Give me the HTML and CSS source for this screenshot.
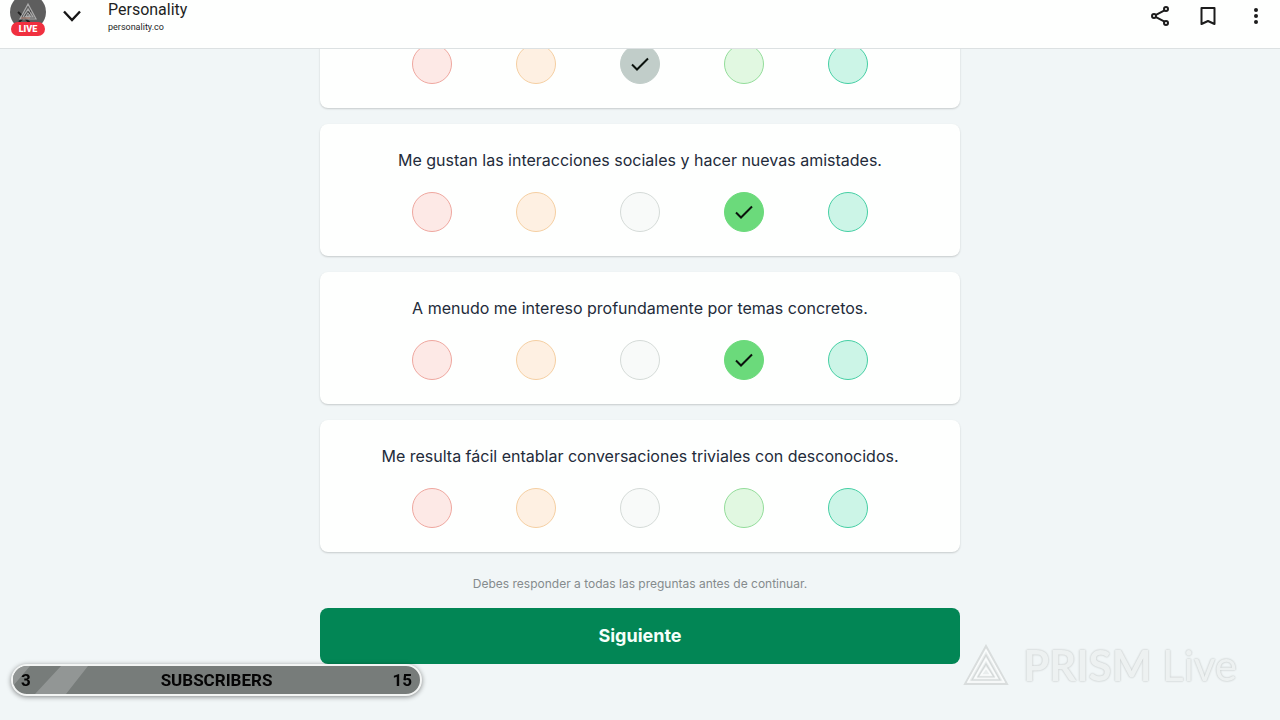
FILE: index.html
```html
<!DOCTYPE html>
<html lang="es">
<head>
<meta charset="utf-8">
<meta name="viewport" content="width=device-width, initial-scale=1">
<title>Personality</title>
<link rel="stylesheet" href="styles.css">
</head>
<body>
<div class="app">
  <header class="topbar">
    <div class="avatar">
      <svg class="avatar-img" viewBox="0 0 36 36" aria-hidden="true">
        <circle cx="18" cy="18" r="18" fill="#5e5e5e"/>
        <path d="M8 18l12 11M21 17L9 28" stroke="#202020" stroke-width="2" fill="none"/>
        <path d="M18 10L10 25H26ZM18 15L13 23H23ZM18 19L16 22H20Z" stroke="#aaa" stroke-width="1.2" fill="none"/>
        <path d="M11 24h9" stroke="#c08a78" stroke-width="1"/>
      </svg>
      <span class="live">LIVE</span>
    </div>
    <button class="icon-btn" aria-label="Minimizar">
      <svg viewBox="0 0 24 24"><path d="M4 7.500l8 8.500 8-8.500" fill="none" stroke="#161616" stroke-width="2.400"/></svg>
    </button>
    <div class="site">
      <span class="site-name">Personality</span>
      <span class="site-url">personality.co</span>
    </div>
    <nav class="actions">
      <button class="icon-btn" aria-label="Compartir">
        <svg viewBox="0 0 24 24" fill="none" stroke="#1c1c1c" stroke-width="2"><path d="M8 10.800l9-4.600M8 13.200l9 4.600"/><circle cx="6" cy="12" r="2"/><circle cx="18" cy="5" r="2"/><circle cx="18" cy="19" r="2"/></svg>
      </button>
      <button class="icon-btn" aria-label="Guardar">
        <svg viewBox="0 0 24 24" fill="none" stroke="#1c1c1c" stroke-width="2"><path d="M5.500 4h13v16l-6.500-3-6.500 3z" stroke-linejoin="round"/></svg>
      </button>
      <button class="icon-btn" aria-label="Más opciones">
        <svg viewBox="0 0 24 24" fill="#1c1c1c"><circle cx="12" cy="6" r="2"/><circle cx="12" cy="12" r="2"/><circle cx="12" cy="18" r="2"/></svg>
      </button>
    </nav>
  </header>

  <main class="page">
    <form class="quiz">
      <section class="card" role="radiogroup">
        <div class="scale">
          <label class="option"><input class="dot red" type="radio" name="q1" aria-label="1"></label>
          <label class="option"><input class="dot orange" type="radio" name="q1" aria-label="2"></label>
          <label class="option"><input class="dot gray" type="radio" name="q1" aria-label="3" checked><svg class="check" viewBox="0 0 20 20"><path d="M2 10.500l5 5L18 4.500"/></svg></label>
          <label class="option"><input class="dot green" type="radio" name="q1" aria-label="4"></label>
          <label class="option"><input class="dot teal" type="radio" name="q1" aria-label="5"></label>
        </div>
      </section>
      <section class="card" role="radiogroup" aria-labelledby="q2">
        <p class="question" id="q2">Me gustan las interacciones sociales y hacer nuevas amistades.</p>
        <div class="scale">
          <label class="option"><input class="dot red" type="radio" name="q2" aria-label="1"></label>
          <label class="option"><input class="dot orange" type="radio" name="q2" aria-label="2"></label>
          <label class="option"><input class="dot gray" type="radio" name="q2" aria-label="3"></label>
          <label class="option"><input class="dot green" type="radio" name="q2" aria-label="4" checked><svg class="check" viewBox="0 0 20 20"><path d="M2 10.500l5 5L18 4.500"/></svg></label>
          <label class="option"><input class="dot teal" type="radio" name="q2" aria-label="5"></label>
        </div>
      </section>
      <section class="card" role="radiogroup" aria-labelledby="q3">
        <p class="question" id="q3">A menudo me intereso profundamente por temas concretos.</p>
        <div class="scale">
          <label class="option"><input class="dot red" type="radio" name="q3" aria-label="1"></label>
          <label class="option"><input class="dot orange" type="radio" name="q3" aria-label="2"></label>
          <label class="option"><input class="dot gray" type="radio" name="q3" aria-label="3"></label>
          <label class="option"><input class="dot green" type="radio" name="q3" aria-label="4" checked><svg class="check" viewBox="0 0 20 20"><path d="M2 10.500l5 5L18 4.500"/></svg></label>
          <label class="option"><input class="dot teal" type="radio" name="q3" aria-label="5"></label>
        </div>
      </section>
      <section class="card" role="radiogroup" aria-labelledby="q4">
        <p class="question" id="q4">Me resulta fácil entablar conversaciones triviales con desconocidos.</p>
        <div class="scale">
          <label class="option"><input class="dot red" type="radio" name="q4" aria-label="1"></label>
          <label class="option"><input class="dot orange" type="radio" name="q4" aria-label="2"></label>
          <label class="option"><input class="dot gray" type="radio" name="q4" aria-label="3"></label>
          <label class="option"><input class="dot green" type="radio" name="q4" aria-label="4"></label>
          <label class="option"><input class="dot teal" type="radio" name="q4" aria-label="5"></label>
        </div>
      </section>
      <div class="submit">
        <p class="hint">Debes responder a todas las preguntas antes de continuar.</p>
        <button class="next" type="button">Siguiente</button>
      </div>
    </form>
  </main>
</div>

<aside class="subs">
  <svg class="subs-stripes" viewBox="0 0 90 28" aria-hidden="true"><path d="M0 0h17L0 20zM22 28L48 0h27L53 28z" fill="#929695"/></svg>
  <span class="subs-now">3</span>
  <span class="subs-label">SUBSCRIBERS</span>
  <span class="subs-goal">15</span>
</aside>

<div class="watermark">
  <svg class="prism" viewBox="0 0 46 42" fill="none" aria-hidden="true">
    <path d="M23 2L2 40H44Z" fill="#e9eded" stroke="#d9dddd" stroke-width="2"/>
    <path d="M23 6L5 38H41ZM23 15L12 34H34ZM23 24L18 31H28Z" stroke="#fafcfc" stroke-width="1.500"/>
    <path d="M23 11L9 36H37ZM23 20L15 33H31Z" stroke="#d4d8d8" stroke-width="1.200"/>
  </svg>
  <span class="wordmark"><b>PRISM</b> Live</span>
</div>
</body>
</html>
```
FILE: styles.css
```css
* { box-sizing: border-box; }
body {
  margin: 0;
  background: #f1f6f7;
  color: #232b3a;
  font-family: Inter, "Liberation Sans", sans-serif;
}
p { margin: 0; }
button { font: inherit; border: 0; padding: 0; cursor: pointer; }

.app { display: flex; flex-direction: column; height: 100vh; }

.topbar {
  display: flex;
  flex: none;
  align-items: flex-start;
  height: 49px;
  padding: 0 12px 0 10px;
  background: #fefffe;
  border-bottom: 1px solid #dce1e2;
  font-family: Roboto, sans-serif;
  position: relative;
  z-index: 1;
}
.avatar { position: relative; width: 36px; height: 36px; margin-right: 14px; }
.avatar-img { position: absolute; bottom: 6px; left: 0; width: 36px; height: 36px; }
.live {
  position: absolute;
  left: 1px;
  bottom: 0;
  width: 34px;
  height: 14px;
  border-radius: 7px;
  background: #f0303f;
  color: #fff;
  font-size: 9px;
  font-weight: 900;
  line-height: 14px;
  text-align: center;
}
.icon-btn {
  width: 24px;
  height: 24px;
  margin-top: 4px;
  background: none;
}
.icon-btn svg { display: block; width: 24px; height: 24px; }
.site { display: flex; flex-direction: column; margin-left: 24px; color: #1f1f1f; }
.site-name { font-size: 16px; line-height: 19px; }
.site-url { font-size: 9px; line-height: 17px; }
.actions { display: flex; gap: 24px; margin-left: auto; }

.page {
  display: flex;
  flex: 1;
  flex-direction: column;
  justify-content: flex-end;
  align-items: center;
  min-height: 0;
  padding: 0 16px 56px;
}
.quiz {
  display: flex;
  flex-direction: column;
  gap: 16px;
  width: 100%;
  max-width: 640px;
}
.card {
  display: flex;
  flex-direction: column;
  gap: 20px;
  padding: 24px;
  border-radius: 8px;
  background: #fefffe;
  box-shadow: 0 1px 2px rgba(0, 0, 0, .18);
}
.question { font-size: 16px; line-height: 24px; text-align: center; }
.scale { display: flex; justify-content: center; gap: 64px; }
.option { display: grid; place-items: center; }
.option > * { grid-area: 1 / 1; }
.dot {
  appearance: none;
  width: 40px;
  height: 40px;
  margin: 0;
  border: 1px solid;
  border-radius: 50%;
}
.red { background: #fde9e6; border-color: #efa79f; }
.orange { background: #fef0e2; border-color: #f5cfa2; }
.gray { background: #f8faf9; border-color: #d5dbd8; }
.green { background: #e1f8e1; border-color: #93dd9a; }
.teal { background: #ccf5e7; border-color: #45cfa4; }
.gray:checked { background: #c1cdc9; border-color: #c1cdc9; }
.green:checked { background: #6bda7b; border-color: #6bda7b; }
.check { width: 20px; height: 20px; fill: none; stroke: #0b120d; stroke-width: 2; pointer-events: none; }

.submit { display: flex; flex-direction: column; gap: 16px; padding-top: 7px; }
.hint { color: #858b8d; font-size: 12px; line-height: 17px; text-align: center; }
.next {
  width: 100%;
  padding: 16px;
  border-radius: 8px;
  background: #028655;
  color: #f5fffa;
  font-size: 18px;
  font-weight: 700;
  line-height: 24px;
}

.subs {
  position: fixed;
  left: 11px;
  bottom: 24px;
  z-index: 2;
  display: grid;
  grid-template-columns: 1fr auto 1fr;
  align-items: center;
  width: 411px;
  height: 32px;
  padding: 0 8px;
  overflow: hidden;
  border: 2px solid #f3f5f4;
  border-radius: 16px;
  background: #777c7a;
  box-shadow: 0 1px 5px rgba(0, 0, 0, .45);
  color: #050505;
  font-family: Roboto, sans-serif;
  font-size: 17px;
  font-weight: 700;
}
.subs span { position: relative; }
.subs-goal { text-align: right; }
.subs-stripes { position: absolute; left: 0; top: 0; width: 90px; height: 28px; }

.watermark {
  position: fixed;
  right: 43px;
  bottom: 34px;
  display: flex;
  align-items: center;
  gap: 14px;
}
.prism { width: 46px; height: 42px; }
.wordmark {
  color: #edf1f1;
  font-family: Lato, sans-serif;
  font-size: 42px;
  line-height: 42px;
  text-shadow: 0 0 2px #c4c9c9, 0 0 2px #d0d4d4;
}
```
